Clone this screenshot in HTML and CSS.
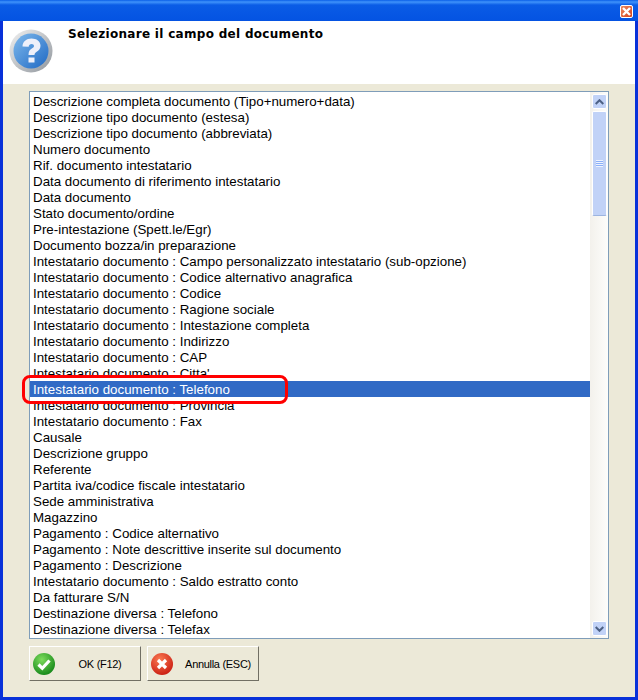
FILE: index.html
```html
<!DOCTYPE html>
<html lang="it">
<head>
    <meta charset="UTF-8">
    <title>Selezionare il campo del documento</title>
    <link rel="stylesheet" href="styles.css">
</head>
<body>
    <div class="window">
        <div class="titlebar">
            <div class="close-btn">
                <svg width="11" height="11" viewBox="0 0 11 11"><path d="M2 2l7 7M9 2l-7 7" stroke="#fff" stroke-width="2.400" fill="none"/></svg>
            </div>
        </div>
        <div class="content">
            <header class="head">
                <svg class="help-icon" width="44" height="44" viewBox="0 0 44 44">
                    <defs>
                        <linearGradient id="ring" x1="0" y1="0" x2="1" y2="1"><stop offset="0" stop-color="#f2f2f2"/><stop offset="1" stop-color="#8f959c"/></linearGradient>
                        <linearGradient id="disc" x1="0" y1="0" x2="1" y2="1"><stop offset="0" stop-color="#7fb9ec"/><stop offset="1" stop-color="#1f69c4"/></linearGradient>
                    </defs>
                    <circle cx="22" cy="22" r="21.5" fill="url(#ring)"/>
                    <circle cx="22" cy="22" r="17.5" fill="url(#disc)"/>
                    <path d="M13.500 17.500c0-5 4-8 9-8s9 2.800 9 7.200c0 3.200-1.800 4.700-3.800 6-1.500 1-2.200 1.700-2.200 3.300h-6c0-3.400 1-4.800 3-6.200 1.500-1 2.500-1.600 2.500-2.800 0-1.200-1-2-2.500-2s-2.700 1-2.800 2.800zM19.500 28.500h6v5h-6z" fill="#eef0fa"/>
                </svg>
                <h1 class="title">Selezionare il campo del documento</h1>
            </header>
            <div class="listbox">
                <ul class="rows">
                    <li>Descrizione completa documento (Tipo+numero+data)</li>
                    <li>Descrizione tipo documento (estesa)</li>
                    <li>Descrizione tipo documento (abbreviata)</li>
                    <li>Numero documento</li>
                    <li>Rif. documento intestatario</li>
                    <li>Data documento di riferimento intestatario</li>
                    <li>Data documento</li>
                    <li>Stato documento/ordine</li>
                    <li>Pre-intestazione (Spett.le/Egr)</li>
                    <li>Documento bozza/in preparazione</li>
                    <li>Intestatario documento : Campo personalizzato intestatario (sub-opzione)</li>
                    <li>Intestatario documento : Codice alternativo anagrafica</li>
                    <li>Intestatario documento : Codice</li>
                    <li>Intestatario documento : Ragione sociale</li>
                    <li>Intestatario documento : Intestazione completa</li>
                    <li>Intestatario documento : Indirizzo</li>
                    <li>Intestatario documento : CAP</li>
                    <li>Intestatario documento : Citta'</li>
                    <li class="selected">Intestatario documento : Telefono</li>
                    <li>Intestatario documento : Provincia</li>
                    <li>Intestatario documento : Fax</li>
                    <li>Causale</li>
                    <li>Descrizione gruppo</li>
                    <li>Referente</li>
                    <li>Partita iva/codice fiscale intestatario</li>
                    <li>Sede amministrativa</li>
                    <li>Magazzino</li>
                    <li>Pagamento : Codice alternativo</li>
                    <li>Pagamento : Note descrittive inserite sul documento</li>
                    <li>Pagamento : Descrizione</li>
                    <li>Intestatario documento : Saldo estratto conto</li>
                    <li>Da fatturare S/N</li>
                    <li>Destinazione diversa : Telefono</li>
                    <li>Destinazione diversa : Telefax</li>
                </ul>
                <div class="scrollbar">
                    <div class="sb-btn sb-up">
                        <svg width="9" height="6" viewBox="0 0 9 6"><path d="M.7 5L4.500 1.200 8.300 5" stroke="#4d6185" stroke-width="2" fill="none"/></svg>
                    </div>
                    <div class="sb-thumb">
                        <span class="grip"></span>
                    </div>
                    <div class="sb-track"></div>
                    <div class="sb-btn sb-down">
                        <svg width="9" height="6" viewBox="0 0 9 6"><path d="M.7 1L4.500 4.800 8.300 1" stroke="#4d6185" stroke-width="2" fill="none"/></svg>
                    </div>
                </div>
            </div>
            <div class="buttons">
                <button class="btn">
                    <svg width="22" height="22" viewBox="0 0 22 22">
                        <defs><radialGradient id="green" cx=".4" cy=".3" r=".8"><stop offset="0" stop-color="#7ddc5c"/><stop offset="1" stop-color="#0b7f12"/></radialGradient></defs>
                        <circle cx="11" cy="11" r="11" fill="url(#green)"/>
                        <path d="M5.500 11.500l3.800 3.800L16.500 7.500" stroke="#fff" stroke-width="3.200" fill="none"/>
                    </svg>
                    <span class="btn-label">OK (F12)</span>
                </button>
                <button class="btn">
                    <svg width="22" height="22" viewBox="0 0 22 22">
                        <defs><radialGradient id="red" cx=".4" cy=".3" r=".8"><stop offset="0" stop-color="#fb7a52"/><stop offset="1" stop-color="#c5140c"/></radialGradient></defs>
                        <circle cx="11" cy="11" r="11" fill="url(#red)"/>
                        <path d="M7 7l8 8M15 7l-8 8" stroke="#fff" stroke-width="3.200" fill="none"/>
                    </svg>
                    <span class="btn-label">Annulla (ESC)</span>
                </button>
            </div>
        </div>
        <div class="highlight"></div>
    </div>
</body>
</html>
```

FILE: styles.css
```css
html, body {
    margin: 0;
    padding: 0;
}
body {
    width: 638px;
    height: 700px;
    overflow: hidden;
    font-family: "Liberation Sans", Arial, sans-serif;
}
.window {
    position: relative;
    width: 638px;
    height: 700px;
    box-sizing: border-box;
    display: flex;
    flex-direction: column;
    background-color: #0831d9;
    padding: 0 3px 3px;
}
.titlebar {
    height: 21px;
    flex: none;
    margin: 0 -3px;
    padding: 5px 5px 0 0;
    box-sizing: border-box;
    display: flex;
    justify-content: flex-end;
    background: linear-gradient(to bottom, #0a5fe8 0, #3f93fb 2px, #0a5ce6 5px, #0453e2 100%);
}
.close-btn {
    width: 13px;
    height: 13px;
    box-sizing: border-box;
    border: 1px solid #fff;
    border-radius: 2px;
    background: linear-gradient(135deg, #eb8a60, #d3431e);
}
.close-btn svg {
    display: block;
}
.content {
    flex: 1;
    display: flex;
    flex-direction: column;
    background-color: #ece9d8;
}
.head {
    height: 63px;
    flex: none;
    display: flex;
    align-items: flex-start;
    background-color: #fff;
}
.help-icon {
    margin: 8px 0 0 6px;
}
.title {
    margin: 6px 0 0 15px;
    font-family: "DejaVu Sans", sans-serif;
    font-size: 12px;
    font-weight: bold;
    letter-spacing: 0.3px;
    line-height: 14px;
    color: #000;
}
.listbox {
    height: 546px;
    margin: 7px 26px 0;
    display: flex;
    border: 1px solid #7f9db9;
    background-color: #fff;
}
.rows {
    flex: 1;
    margin: 0;
    padding: 1px 0 0;
    list-style: none;
    overflow: hidden;
}
.rows li {
    height: 16px;
    line-height: 18px;
    padding-left: 3px;
    font-size: 13.33px;
    color: #000;
    white-space: nowrap;
}
.rows li.selected {
    background-color: #316ac5;
    color: #fff;
}
.scrollbar {
    width: 18px;
    flex: none;
    display: flex;
    flex-direction: column;
    background: linear-gradient(to right, #f3f1ec, #fdfdfb);
}
.sb-btn {
    height: 15px;
    width: 15px;
    flex: none;
    box-sizing: border-box;
    margin-left: 2px;
    display: flex;
    align-items: center;
    justify-content: center;
    border: 1px solid #fff;
    border-radius: 2px;
    background-color: #c1d2f7;
}
.sb-up {
    margin-top: 2px;
}
.sb-down {
    margin-bottom: 2px;
}
.sb-thumb {
    height: 105px;
    width: 15px;
    flex: none;
    box-sizing: border-box;
    display: flex;
    align-items: center;
    justify-content: center;
    margin: 2px 0 0 2px;
    border: 1px solid #fff;
    border-bottom-color: #9cb4e0;
    border-radius: 2px;
    background-color: #c1d2f7;
}
.grip {
    width: 7px;
    height: 7px;
    background: repeating-linear-gradient(to bottom, #eef3fe 0, #eef3fe 1px, #8cb0f8 1px, #8cb0f8 2px);
}
.sb-track {
    flex: 1;
}
.buttons {
    display: flex;
    gap: 6px;
    margin: 7px 26px 0;
}
.btn {
    width: 112px;
    height: 35px;
    box-sizing: border-box;
    display: flex;
    align-items: center;
    padding: 0 0 0 3px;
    font-family: "Liberation Sans", Arial, sans-serif;
    font-size: 11px;
    letter-spacing: -0.3px;
    color: #000;
    background-color: #ece9d8;
    border: 1px solid;
    border-color: #fff #716f64 #716f64 #fff;
}
.btn-label {
    flex: 1;
    text-align: center;
    padding-left: 5px;
}
.highlight {
    position: absolute;
    left: 22px;
    top: 375px;
    width: 266px;
    height: 29px;
    box-sizing: border-box;
    border: 3px solid #f00;
    border-radius: 8px;
}
```
